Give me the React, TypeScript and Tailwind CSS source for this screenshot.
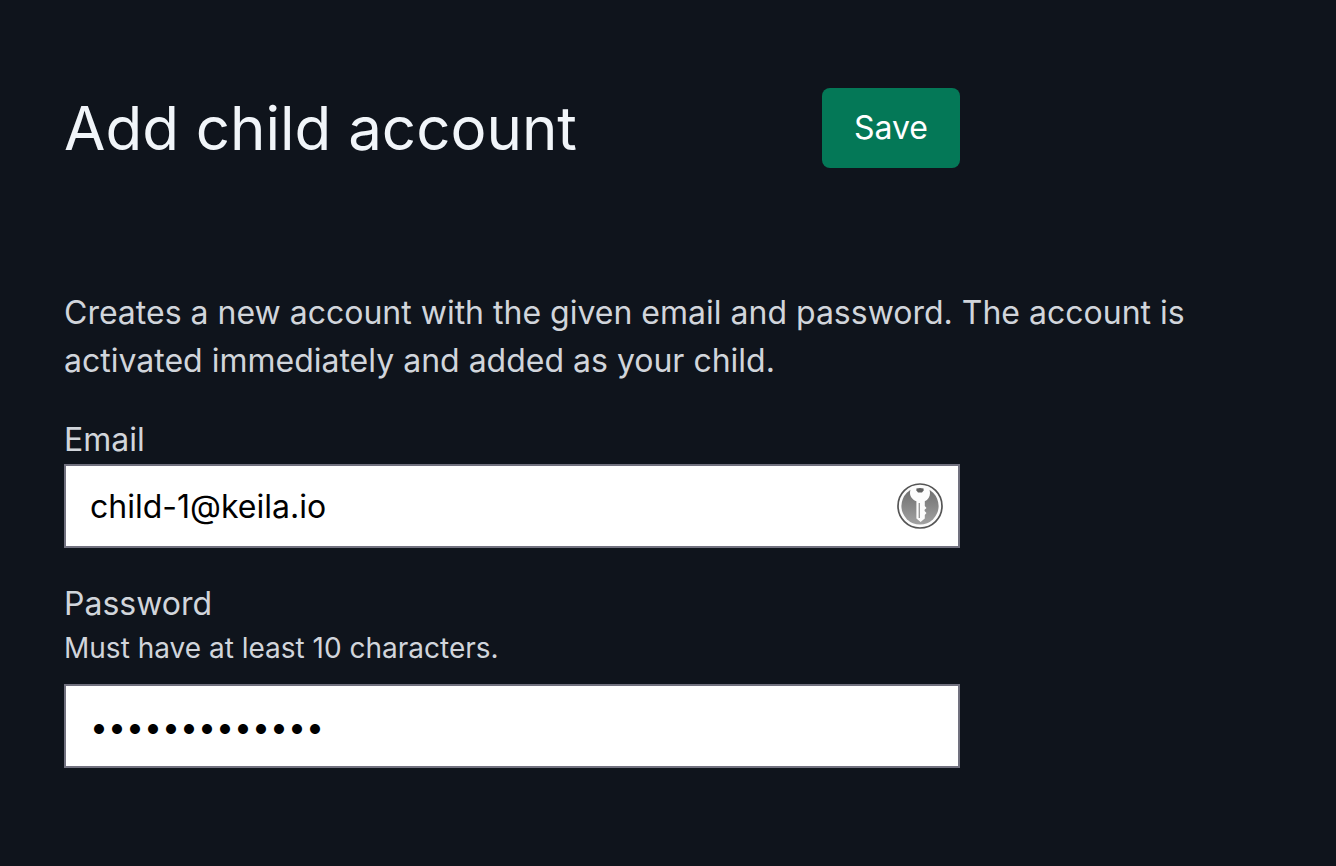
import React, { useState } from 'react';

function KeyBadge() {
  return (
    <svg viewBox="0 0 46 46" className="size-[46px]" aria-hidden="true">
      <defs>
        <linearGradient id="badge-shade" x1="0" y1="0" x2="0" y2="1">
          <stop offset="0" stopColor="#6c6c6c" />
          <stop offset="1" stopColor="#a2a2a2" />
        </linearGradient>
      </defs>
      <circle cx="23" cy="23" r="22" fill="#fcfcfc" stroke="#555" strokeWidth="1.7" />
      <circle cx="23" cy="23" r="18.6" fill="url(#badge-shade)" />
      <path
        d="M15 3.5h16c1.400 2 2 4.300 2 6.700 0 3.600-2 6.500-5.200 8.100v4.700l1.700 1.900-1.900 1.900v1.200l1.900 1.900-1.700 2v3.700l-4.200 3.500-4.200-3.500V18.300c-3.600-1.500-6.400-4.500-6.400-8.100 0-2.400.7-4.700 2-6.700z"
        fill="#fcfcfc"
      />
      <path d="M19.400 5.600c2.300-.8 4.900-.8 7.200 0v2l-1.600 1.900h-4L19.400 7.600z" fill="#606060" />
      <path d="M22.300 20v15" stroke="#9a9a9a" strokeWidth="1.400" />
    </svg>
  );
}

const field =
  'block h-[84px] w-full border-2 border-[#71717f] bg-white px-6 text-[32px] text-black outline-none';

export default function App() {
  const [email, setEmail] = useState('child-1@keila.io');
  const [password, setPassword] = useState('abcdefghijklm');
  return (
    <main className="min-h-screen bg-[#0f141c] px-16 pt-[88px] pb-24 font-['Inter',sans-serif] text-[32px] leading-[48px] text-[#d1d5db]">
      <form onSubmit={(e) => e.preventDefault()}>
        <header className="flex max-w-[896px] items-center justify-between">
          <h1 className="text-[60px] leading-[80px] text-[#f1f5f9]">Add child account</h1>
          <button type="submit" className="h-20 rounded-lg bg-[#047857] px-8 text-[32px] text-white">
            Save
          </button>
        </header>
        <p className="mt-[121px] max-w-[1208px]">
          Creates a new account with the given email and password. The account is activated immediately and added as
          your child.
        </p>
        <div className="mt-[31px] max-w-[896px]">
          <label htmlFor="email" className="block">Email</label>
          <div className="relative">
            <input id="email" type="email" value={email} onChange={(e) => setEmail(e.target.value)} className={field} />
            <span className="absolute inset-y-0 right-[17px] flex items-center">
              <KeyBadge />
            </span>
          </div>
        </div>
        <div className="mt-8 max-w-[896px]">
          <label htmlFor="password" className="block">Password</label>
          <p id="password-hint" className="mb-4 text-[28px] leading-[40px]">Must have at least 10 characters.</p>
          <input
            id="password"
            type="password"
            aria-describedby="password-hint"
            value={password}
            onChange={(e) => setPassword(e.target.value)}
            className={field}
          />
        </div>
      </form>
    </main>
  );
}
